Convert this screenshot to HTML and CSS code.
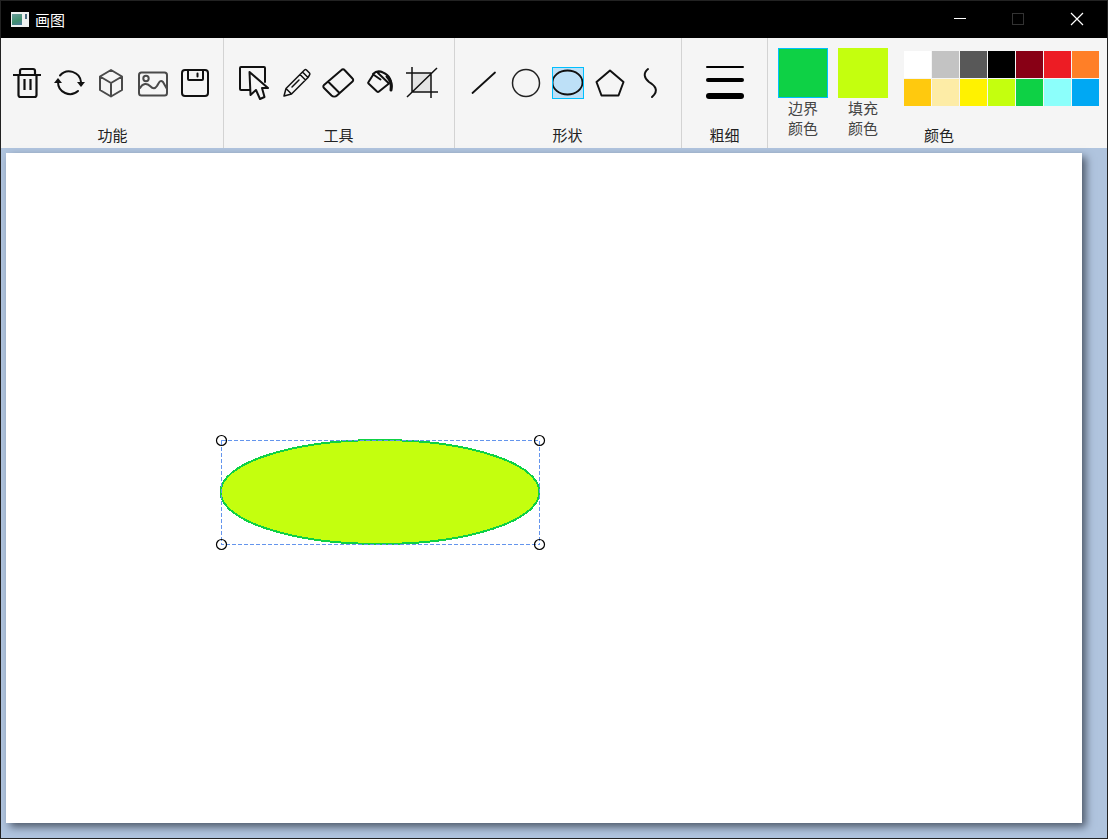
FILE: index.html
```html
<!DOCTYPE html>
<html lang="zh-CN">
<head>
  <meta charset="UTF-8" />
  <title>画图</title>
  <link rel="stylesheet" href="styles.css">
</head>
<body>
  <div class="window">
    <div class="titlebar">
      <div class="app-icon"><span class="app-icon-img"></span><span class="app-icon-mark"></span></div>
      <span class="app-title">画图</span>
      <div class="win-btns">
        <div class="win-btn"><svg width="58" height="37" viewBox="0 0 58 37"><path d="M21 17.500H33" stroke="#fff" stroke-width="1"/></svg></div>
        <div class="win-btn"><svg width="58" height="37" viewBox="0 0 58 37"><rect x="21.500" y="12.500" width="11" height="11" fill="none" stroke="#333" stroke-width="1"/></svg></div>
        <div class="win-btn"><svg width="58" height="37" viewBox="0 0 58 37"><path d="M22 12L34 24M34 12L22 24" stroke="#fff" stroke-width="1.200"/></svg></div>
      </div>
    </div>

    <div class="ribbon">
      <!-- 功能 -->
      <div class="group group-func">
        <div class="tools">
          <svg class="icon trash" viewBox="0 0 42 42"><path d="M7 13H35M14 13V9a2 2 0 0 1 2-2H27a2 2 0 0 1 2 2V13M12.500 13V33a2 2 0 0 0 2 2H28.500a2 2 0 0 0 2-2V13M18.500 17V28M24.500 17V28"/></svg>
          <svg class="icon" viewBox="0 0 42 42"><path d="M12 13.500A12 12 0 0 1 33 20M30 29A12 12 0 0 1 10 20"/><polygon class="solid" points="29,20 37,20 33,25"/><polygon class="solid" points="6,21 14,21 10,16"/></svg>
          <svg class="icon soft" viewBox="0 0 42 42"><path d="M21 8L32 14.500V28L21 34.500L10 28V14.500ZM10 14.500L21 21L32 14.500M21 21V34.500"/></svg>
          <svg class="icon soft" viewBox="0 0 42 42"><rect x="7" y="10.500" width="28" height="23" rx="2.500"/><circle cx="14" cy="16.500" r="2.700"/><path d="M8 26C11 21 15 21 18 24S23 27 25 24S28 17 31 20L35 27"/></svg>
          <svg class="icon" viewBox="0 0 42 42"><rect x="8" y="8" width="26" height="26" rx="3"/><path d="M14 8V17a1 1 0 0 0 1 1H28a1 1 0 0 0 1-1V8M23.500 11.500V14.500"/></svg>
        </div>
        <div class="group-label">功能</div>
      </div>

      <!-- 工具 -->
      <div class="group group-tool">
        <div class="tools">
          <svg class="icon" viewBox="0 0 42 42"><path d="M18 28H9a1 1 0 0 1-1-1V6a1 1 0 0 1 1-1H32a1 1 0 0 1 1 1V20"/><polygon points="17.500,10 36,26 30,26 32.500,35 28,37 24,28 18.500,33"/></svg>
          <svg class="icon pencil" viewBox="-1 0 42 42"><path d="M9 34L11 26.500L27.500 10L33 15.500L16.500 32ZM27.500 10L29.500 8a1.500 1.500 0 0 1 2 0L34.500 11a1.500 1.500 0 0 1 0 2L33 15.500M25 12.500L30.500 18M17 25L24 18M11 26.500L16.500 32"/></svg>
          <svg class="icon" viewBox="-2 0 42 42"><path d="M23.500 8a2 2 0 0 1 3 0L34.500 16.500a2 2 0 0 1 0 3L19 33.500a4 4 0 0 1-5.500 0L6 26a2 2 0 0 1 0-3ZM10 19.500L21 30.500"/></svg>
          <svg class="icon" viewBox="-1 0 42 42"><path d="M19 11L30 21.500L20 29.500a1.500 1.500 0 0 1-2 0L9.500 21.500a1 1 0 0 1 0-1.500L14 13M14 12C17 9 21 9 24 10.500C30 13 34 19 32 28M15 13L21.500 17.500"/><path d="M28 14.500C31.500 18 33 23 32 28" stroke-width="3"/></svg>
          <svg class="icon crop" viewBox="-1 0 42 42"><rect class="shade" x="11" y="11" width="19" height="19"/><path d="M11 5V30H37M5 11H30V36M6 35L36 6"/></svg>
        </div>
        <div class="group-label">工具</div>
      </div>

      <!-- 形状 -->
      <div class="group group-shape">
        <div class="tools">
          <svg class="icon" viewBox="0 0 42 42"><path d="M9.500 31L32 10.500" stroke-width="1.800"/></svg>
          <svg class="icon thin" viewBox="0 0 42 42"><circle cx="21" cy="21" r="13.500"/></svg>
          <div class="shape-on"><svg width="32" height="32" viewBox="0 0 32 32" class="ellipse-glyph"><ellipse cx="15.500" cy="15.500" rx="15" ry="12"/></svg></div>
          <svg class="icon" viewBox="0 0 42 42"><polygon points="21,8.500 34.500,20 29.500,33.500 12.500,33.500 7.500,20"/></svg>
          <svg class="icon" viewBox="0 0 42 42"><path d="M17 7C12 11 13 16 18 20C23 23 29 28 21 35"/></svg>
        </div>
        <div class="group-label">形状</div>
      </div>

      <!-- 粗细 -->
      <div class="group group-weight">
        <div class="weights">
          <span class="weight w1"></span>
          <span class="weight w2"></span>
          <span class="weight w3"></span>
        </div>
        <div class="group-label">粗细</div>
      </div>

      <!-- 颜色 -->
      <div class="group-color">
        <div class="swatch-col">
          <div class="swatch swatch-line"></div>
          <div class="swatch-label">边界<br>颜色</div>
        </div>
        <div class="swatch-col">
          <div class="swatch swatch-fill"></div>
          <div class="swatch-label">填充<br>颜色</div>
        </div>
        <div class="palette-col">
          <div class="palette">
            <span class="c1"></span><span class="c2"></span><span class="c3"></span><span class="c4"></span><span class="c5"></span><span class="c6"></span><span class="c7"></span>
            <span class="c8"></span><span class="c9"></span><span class="c10"></span><span class="c11"></span><span class="c12"></span><span class="c13"></span><span class="c14"></span>
          </div>
          <div class="group-label">颜色</div>
        </div>
      </div>
    </div>

    <div class="stage">
      <div class="canvas">
        <svg class="drawing" width="1076" height="670" viewBox="0 0 1076 670">
          <ellipse class="shape" cx="374" cy="339" rx="159.500" ry="52"/>
          <rect class="select" x="215.500" y="287.500" width="318" height="104"/>
          <circle class="handle" cx="215.500" cy="287.500" r="5"/>
          <circle class="handle" cx="533.500" cy="287.500" r="5"/>
          <circle class="handle" cx="215.500" cy="391.500" r="5"/>
          <circle class="handle" cx="533.500" cy="391.500" r="5"/>
        </svg>
      </div>
    </div>
  </div>
</body>
</html>
```

FILE: styles.css
```css
html, body {
  margin: 0;
  padding: 0;
}
body {
  font-family: "Noto Sans CJK SC", "Liberation Sans", sans-serif;
  background: #b0c4de;
  overflow: hidden;
}
.window {
  width: 1108px;
  height: 839px;
  box-sizing: border-box;
  border: 1px solid #222;
  display: flex;
  flex-direction: column;
  overflow: hidden;
}

/* title bar */
.titlebar {
  height: 37px;
  flex: none;
  background: #000;
  color: #fff;
  display: flex;
  align-items: center;
  padding-left: 10px;
}
.app-icon {
  width: 18px;
  height: 15px;
  background: #eef1f1;
  display: flex;
  align-items: center;
  padding-left: 1px;
  gap: 3px;
  box-sizing: border-box;
}
.app-icon-img {
  width: 10px;
  height: 11px;
  background: linear-gradient(160deg, #6a9c9c, #3f8f6e 60%, #4f78a0);
}
.app-icon-mark {
  width: 2px;
  height: 5px;
  margin-top: -6px;
  background: #4a6a80;
}
.app-title {
  font-size: 15px;
  line-height: 20px;
  margin-left: 6px;
}
.win-btns {
  margin-left: auto;
  display: flex;
}
.win-btn {
  width: 58px;
  height: 37px;
}
.win-btn svg {
  display: block;
}

/* ribbon */
.ribbon {
  height: 110px;
  flex: none;
  background: #f5f5f5;
  display: flex;
  color: #222;
}
.group {
  box-sizing: border-box;
  border-right: 1px solid #d3d3d3;
  display: flex;
  flex-direction: column;
}
.group-func { width: 223px; padding-left: 5px; }
.group-tool { width: 231px; padding-left: 8px; }
.group-shape { width: 227px; padding-left: 8px; }
.group-weight { width: 86px; }
.tools {
  height: 87px;
  padding-top: 24px;
  box-sizing: border-box;
  display: flex;
}
.group-label {
  height: 23px;
  line-height: 20px;
  font-size: 15px;
  text-align: center;
}
.group-func .group-label { padding-right: 5px; margin-left: 1px; }
.group-tool .group-label { padding-right: 9px; }
.group-shape .group-label { padding-right: 9px; }

.icon {
  width: 42px;
  height: 42px;
  flex: none;
  fill: none;
  stroke: #111;
  stroke-width: 2;
  stroke-linejoin: round;
  stroke-linecap: round;
}
.icon.soft { stroke: #4a4a4a; }
.icon.thin { stroke: #222; stroke-width: 1.5; }
.icon.trash { stroke-width: 2.2; stroke-linecap: butt; }
.icon.pencil { stroke-width: 1.5; }
.icon.crop { stroke-width: 1.5; stroke-linecap: butt; }
.icon .solid { fill: #111; stroke: none; }
.icon .shade { fill: #e4e4e4; stroke: none; }

.shape-on {
  width: 32px;
  height: 32px;
  margin: 5px;
  flex: none;
  background: #bde0f7;
  outline: 1px solid #00bfff;
  outline-offset: -1px;
}
.ellipse-glyph {
  display: block;
  fill: none;
  stroke: #111;
  stroke-width: 1.8;
}

.weights {
  height: 87px;
  padding-top: 28px;
  box-sizing: border-box;
  display: flex;
  flex-direction: column;
  align-items: center;
}
.weight {
  width: 38px;
  background: #000;
  border-radius: 3px;
}
.w1 { height: 2px; margin-bottom: 10px; }
.w2 { height: 4px; margin-bottom: 11px; }
.w3 { height: 6px; }

.group-color {
  flex: 1;
  display: flex;
  padding: 10px 0 0 10px;
}
.swatch-col {
  width: 50px;
  margin-right: 10px;
}
.swatch {
  width: 50px;
  height: 50px;
  box-sizing: border-box;
}
.swatch-line {
  background: #0ed145;
  border: 1px solid #00bfff;
}
.swatch-fill {
  background: #c4ff0e;
}
.swatch-label {
  font-size: 15px;
  line-height: 20px;
  text-align: center;
  color: #444;
}
.palette-col {
  margin-left: 6px;
  padding-top: 3px;
  display: flex;
  flex-direction: column;
}
.palette {
  display: grid;
  grid-template-columns: repeat(7, 27px);
  grid-auto-rows: 27px;
  gap: 1px;
  height: 55px;
  margin-bottom: 19px;
}
.palette-col .group-label {
  width: 70px;
}
.c1 { background: #ffffff; }
.c2 { background: #c3c3c3; }
.c3 { background: #585858; }
.c4 { background: #000000; }
.c5 { background: #880015; }
.c6 { background: #ed1c24; }
.c7 { background: #ff7f27; }
.c8 { background: #ffc90e; }
.c9 { background: #fdeca6; }
.c10 { background: #fff200; }
.c11 { background: #c4ff0e; }
.c12 { background: #0ed145; }
.c13 { background: #8cfffb; }
.c14 { background: #00a8f3; }

/* drawing area */
.stage {
  flex: 1;
  background: #b0c4de;
  padding: 5px 0 0 5px;
}
.canvas {
  width: 1076px;
  height: 670px;
  background: #fff;
  box-shadow: 4px 4px 8px #4f5a6b;
}
.drawing {
  display: block;
}
.shape {
  fill: #c4ff0e;
  stroke: #0ed145;
  stroke-width: 2;
  shape-rendering: crispEdges;
}
.select {
  fill: none;
  stroke: #6495ed;
  stroke-width: 1;
  stroke-dasharray: 4 2;
  shape-rendering: crispEdges;
}
.handle {
  fill: none;
  stroke: #000;
  stroke-width: 1.200;
}
```
